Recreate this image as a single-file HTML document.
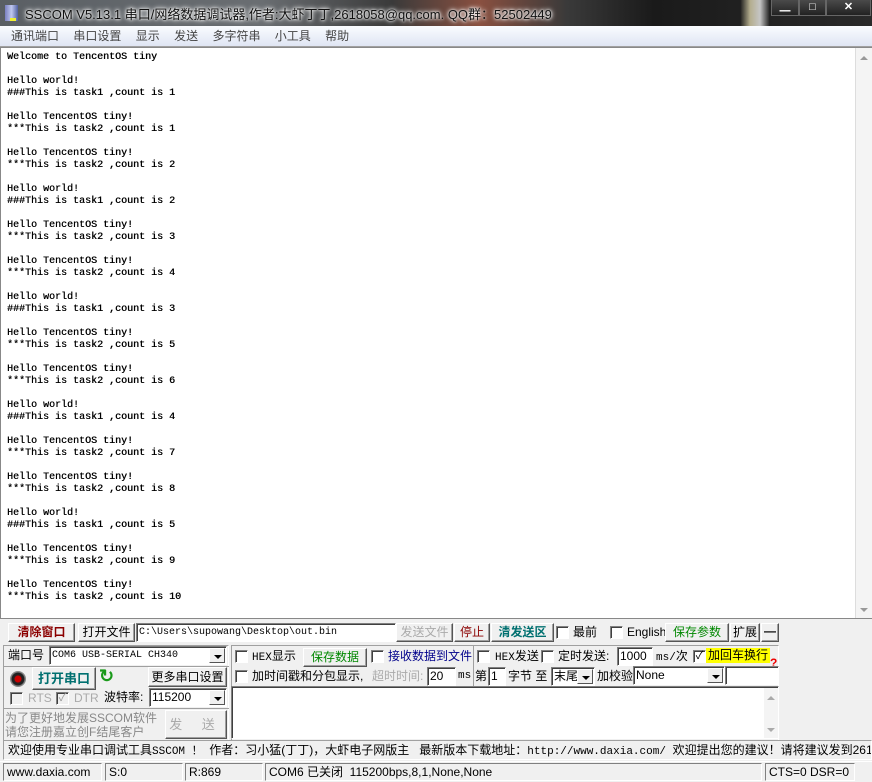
<!DOCTYPE html>
<html><head><meta charset="utf-8"><style>
*{margin:0;padding:0;box-sizing:border-box}
body{width:872px;height:782px;overflow:hidden;background:#f0f0f0;position:relative;font-family:"Liberation Sans","Noto Sans CJK SC","WenQuanYi Zen Hei",sans-serif;font-size:12px;color:#000}
.a{position:absolute}
#title{left:0;top:0;width:872px;height:26px;background:linear-gradient(90deg,#5a5f64 0%,#6a6e72 30%,#3a3a3a 45%,#8a5040 55%,#3a3a3a 65%,#1a1a1a 75%,#2a2a2a 100%)}
#title .t{left:25px;top:4px;font-size:13px;color:#111;text-shadow:0 0 6px #fff,0 0 4px #fff,0 0 2px #fff;white-space:nowrap}
.wb{top:0;height:16px;border:1px solid #666;border-top:none;background:linear-gradient(#4a4a4a,#222);color:#fff;text-align:center;font-size:11px;line-height:15px;font-weight:bold}
#menu{left:0;top:26px;width:872px;height:21px;background:linear-gradient(#fafcff,#dfe5f3);border-bottom:1px solid #a0a0a0}
#menu span{margin-left:11px;margin-right:0;color:#444;font-size:12px;line-height:20px}
#out{left:0;top:47px;width:872px;height:572px;background:#fff;border:1px solid #888;border-right:none}
#out pre{position:absolute;left:6px;top:4px;font-family:"Liberation Mono",monospace;font-size:10px;line-height:12px;color:#000;text-shadow:0.3px 0 #000}
#sb{left:855px;top:48px;width:17px;height:570px;background:#f4f4f4;border-left:1px solid #ddd}
.btn{position:absolute;background:#f0f0f0;border:1px solid;border-color:#fff #555 #555 #fff;box-shadow:inset -1px -1px #a0a0a0;text-align:center;font-size:12px;white-space:nowrap}
.in{position:absolute;background:#fff;border:1px solid;border-color:#808080 #fff #fff #808080;box-shadow:inset 1px 1px #404040;white-space:nowrap;overflow:hidden}
.cb{position:absolute;width:13px;height:13px;background:#fff;border:1px solid;border-color:#808080 #fff #fff #808080;box-shadow:inset 1px 1px #404040;font-size:11px;line-height:10px;text-align:center}
.dd{position:absolute;right:1px;top:1px;width:16px;bottom:1px;background:#f0f0f0;border:1px solid;border-color:#fff #555 #555 #fff}
.dd:after{content:"";position:absolute;left:4px;top:6px;border-left:4px solid transparent;border-right:4px solid transparent;border-top:4px solid #000}
.lbl{position:absolute;white-space:nowrap;line-height:15px}
.mono{font-family:"Liberation Mono",monospace;font-size:10px}
.grp{position:absolute;border:1px solid;border-color:#a0a0a0 #fff #fff #a0a0a0}
.cj{font-family:"Liberation Sans","Noto Sans CJK SC",sans-serif;font-size:12px}
</style></head><body>
<div id="title" class="a">
 <div class="a" style="left:5px;top:5px;width:13px;height:16px;background:linear-gradient(90deg,#7a80c0,#c0c8f0,#5060a0)"></div>
 <div class="a" style="left:10px;top:18px;width:6px;height:3px;background:#ee3"></div>
 <div class="a t">SSCOM V5.13.1 串口/网络数据调试器,作者:大虾丁丁,2618058@qq.com. QQ群：52502449</div>
 <div class="a" style="left:740px;top:0;width:30px;height:26px;background:linear-gradient(90deg,#1a1a1a,#d8d0a8,#eee,#1a1a1a);opacity:.8"></div>
 <div class="a wb" style="left:771px;width:28px">▁</div>
 <div class="a wb" style="left:799px;width:27px">□</div>
 <div class="a wb" style="left:826px;width:45px">✕</div>
</div>
<div id="menu" class="a"><span>通讯端口</span> <span>串口设置</span> <span>显示</span> <span>发送</span> <span>多字符串</span> <span>小工具</span> <span>帮助</span></div>
<div id="out" class="a"><pre>Welcome to TencentOS tiny

Hello world!
###This is task1 ,count is 1

Hello TencentOS tiny!
***This is task2 ,count is 1

Hello TencentOS tiny!
***This is task2 ,count is 2

Hello world!
###This is task1 ,count is 2

Hello TencentOS tiny!
***This is task2 ,count is 3

Hello TencentOS tiny!
***This is task2 ,count is 4

Hello world!
###This is task1 ,count is 3

Hello TencentOS tiny!
***This is task2 ,count is 5

Hello TencentOS tiny!
***This is task2 ,count is 6

Hello world!
###This is task1 ,count is 4

Hello TencentOS tiny!
***This is task2 ,count is 7

Hello TencentOS tiny!
***This is task2 ,count is 8

Hello world!
###This is task1 ,count is 5

Hello TencentOS tiny!
***This is task2 ,count is 9

Hello TencentOS tiny!
***This is task2 ,count is 10</pre></div>
<div id="sb" class="a"><div class="a" style="left:4px;top:8px;border-left:4px solid transparent;border-right:4px solid transparent;border-bottom:4px solid #999"></div><div class="a" style="left:4px;bottom:6px;border-left:4px solid transparent;border-right:4px solid transparent;border-top:4px solid #999"></div></div>

<div class="btn" style="left:8px;top:623px;width:67px;height:19px;line-height:17px;color:#8b0000;font-weight:bold">清除窗口</div>
<div class="btn" style="left:78px;top:623px;width:57px;height:19px;line-height:17px">打开文件</div>
<div class="in mono" style="left:136px;top:623px;width:260px;height:19px;line-height:17px;padding-left:2px">C:\Users\supowang\Desktop\out.bin</div>
<div class="btn" style="left:396px;top:623px;width:57px;height:19px;line-height:17px;color:#aaa">发送文件</div>
<div class="btn" style="left:454px;top:623px;width:36px;height:19px;line-height:17px;color:#8b0000">停止</div>
<div class="btn" style="left:491px;top:623px;width:63px;height:19px;line-height:17px;color:#007070;font-weight:bold">清发送区</div>
<div class="cb" style="left:556px;top:626px"></div><div class="lbl" style="left:573px;top:625px">最前</div>
<div class="cb" style="left:610px;top:626px"></div><div class="lbl" style="left:627px;top:625px">English</div>
<div class="btn" style="left:665px;top:623px;width:64px;height:19px;line-height:17px;color:#080">保存参数</div>
<div class="btn" style="left:730px;top:623px;width:30px;height:19px;line-height:17px">扩展</div>
<div class="btn" style="left:761px;top:623px;width:18px;height:19px;line-height:15px;font-weight:bold">—</div>

<div class="grp" style="left:3px;top:645px;width:226px;height:96px"></div>
<div class="lbl" style="left:8px;top:648px">端口号</div>
<div class="in mono" style="left:49px;top:646px;width:178px;height:19px;line-height:17px;padding-left:2px">COM6 USB-SERIAL CH340<div class="dd"></div></div>
<div class="a" style="left:3px;top:666px;width:226px;border-top:1px solid #a0a0a0"></div>
<div class="a" style="left:10px;top:671px;width:16px;height:16px;border-radius:50%;background:radial-gradient(circle,#c00 0 3px,#222 4px 6px,#888 7px)"></div>
<div class="btn" style="left:32px;top:667px;width:64px;height:23px;line-height:21px;color:#007070;font-weight:bold;font-size:13px">打开串口</div>
<div class="lbl" style="left:99px;top:669px;color:#1a9a1a;font-size:18px;font-weight:bold">↻</div>
<div class="btn" style="left:148px;top:667px;width:79px;height:20px;line-height:18px">更多串口设置</div>
<div class="cb" style="left:10px;top:692px;background:#f0f0f0"></div><div class="lbl" style="left:28px;top:691px;color:#aaa">RTS</div>
<div class="cb" style="left:56px;top:692px;background:#f0f0f0;color:#999">✓</div><div class="lbl" style="left:74px;top:691px;color:#aaa">DTR</div>
<div class="lbl" style="left:104px;top:690px">波特率:</div>
<div class="in" style="left:149px;top:688px;width:78px;height:19px;line-height:17px;padding-left:2px">115200<div class="dd"></div></div>
<div class="a" style="left:3px;top:708px;width:226px;border-top:1px solid #a0a0a0"></div>
<div class="lbl" style="left:5px;top:711px;color:#888;line-height:14px">为了更好地发展SSCOM软件<br>请您注册嘉立创F结尾客户</div>
<div class="btn" style="left:165px;top:710px;width:62px;height:29px;line-height:27px;color:#aaa;font-size:13px;letter-spacing:8px">发 送</div>

<div class="grp" style="left:231px;top:645px;width:548px;height:96px"></div>
<div class="cb" style="left:235px;top:650px"></div><div class="lbl mono" style="left:252px;top:649px;font-size:11px">HEX<span class="cj">显示</span></div>
<div class="btn" style="left:303px;top:648px;width:64px;height:19px;line-height:17px;color:#080">保存数据</div>
<div class="cb" style="left:371px;top:650px"></div><div class="lbl" style="left:388px;top:649px;color:#00008b">接收数据到文件</div>
<div class="a" style="left:473px;top:645px;height:42px;border-left:1px solid #a0a0a0"></div>
<div class="cb" style="left:477px;top:650px"></div><div class="lbl mono" style="left:495px;top:649px;font-size:11px">HEX<span class="cj">发送</span></div>
<div class="cb" style="left:541px;top:650px"></div><div class="lbl" style="left:558px;top:649px">定时发送:</div>
<div class="in" style="left:617px;top:647px;width:36px;height:19px;line-height:17px;padding-left:2px">1000</div>
<div class="lbl mono" style="left:656px;top:649px;font-size:11px">ms/<span class="cj">次</span></div>
<div class="cb" style="left:693px;top:650px">✓</div>
<div class="lbl" style="left:706px;top:648px;background:#ff0;padding:0 2px;height:15px;line-height:15px">加回车换行</div>
<div class="lbl" style="left:770px;top:656px;color:#e00;font-weight:bold;font-size:12px">?</div>
<div class="cb" style="left:235px;top:670px"></div><div class="lbl" style="left:252px;top:669px">加时间戳和分包显示,</div>
<div class="lbl" style="left:372px;top:669px;color:#aaa">超时时间:</div>
<div class="in" style="left:427px;top:667px;width:29px;height:19px;line-height:17px;padding-left:2px">20</div>
<div class="lbl mono" style="left:458px;top:669px;font-size:11px">ms</div>
<div class="lbl" style="left:475px;top:669px">第</div>
<div class="in" style="left:488px;top:667px;width:18px;height:19px;line-height:17px;padding-left:2px">1</div>
<div class="lbl" style="left:508px;top:669px">字节 至</div>
<div class="in" style="left:551px;top:667px;width:44px;height:19px;line-height:17px;padding-left:2px">末尾<div class="dd"></div></div>
<div class="lbl" style="left:597px;top:669px">加校验</div>
<div class="in" style="left:633px;top:666px;width:92px;height:19px;line-height:17px;padding-left:2px">None<div class="dd"></div></div>
<div class="in" style="left:725px;top:666px;width:54px;height:19px"></div>
<div class="in" style="left:231px;top:686px;width:548px;height:53px"></div>
<div class="a" style="left:764px;top:688px;width:14px;height:50px;background:#f4f4f4"><div class="a" style="left:3px;top:8px;border-left:4px solid transparent;border-right:4px solid transparent;border-bottom:4px solid #aaa"></div><div class="a" style="left:3px;bottom:6px;border-left:4px solid transparent;border-right:4px solid transparent;border-top:4px solid #aaa"></div></div>

<div class="a" style="left:3px;top:740px;width:869px;height:20px;border:1px solid;border-color:#a0a0a0 #fff #fff #a0a0a0;white-space:nowrap;overflow:hidden;line-height:18px;padding-left:4px">欢迎使用专业串口调试工具<span class="mono" style="font-size:11px">SSCOM ！</span>&nbsp;&nbsp;作者：习小猛(丁丁)，大虾电子网版主&nbsp;&nbsp;&nbsp;最新版本下载地址：<span class="mono" style="font-size:11px">http://www.daxia.com/</span>&nbsp;&nbsp;欢迎提出您的建议！请将建议发到2618058@qq.com</div>
<div class="a" style="left:0;top:761px;width:872px;height:21px;background:#f0f0f0;border-top:1px solid #fff"></div>
<div class="in" style="left:3px;top:763px;width:99px;height:18px;background:#f0f0f0;box-shadow:none;line-height:16px;padding-left:3px;font-size:12px">www.daxia.com</div>
<div class="in" style="left:105px;top:763px;width:78px;height:18px;background:#f0f0f0;box-shadow:none;line-height:16px;padding-left:3px">S:0</div>
<div class="in" style="left:185px;top:763px;width:78px;height:18px;background:#f0f0f0;box-shadow:none;line-height:16px;padding-left:3px">R:869</div>
<div class="in" style="left:265px;top:763px;width:497px;height:18px;background:#f0f0f0;box-shadow:none;line-height:16px;padding-left:3px">COM6 已关闭&nbsp; 115200bps,8,1,None,None</div>
<div class="in" style="left:765px;top:763px;width:90px;height:18px;background:#f0f0f0;box-shadow:none;line-height:16px;padding-left:3px">CTS=0 DSR=0</div>
</body></html>
